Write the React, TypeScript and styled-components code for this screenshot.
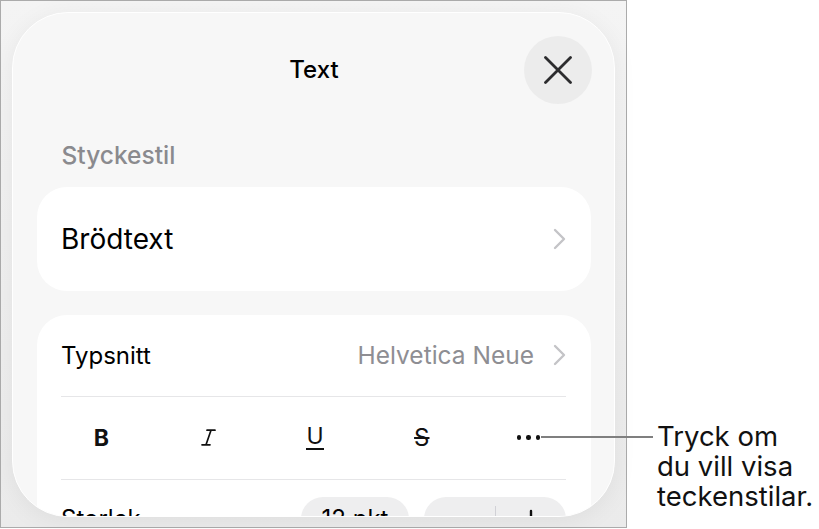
import React from "react";
import styled, { createGlobalStyle } from "styled-components";

const GlobalStyle = createGlobalStyle`
  html, body {
    margin: 0;
    padding: 0;
    background: #fff;
  }
  body {
    font-family: Inter, "Noto Sans", sans-serif;
    -webkit-font-smoothing: antialiased;
  }
`;

const Page = styled.div`
  position: relative;
  display: flex;
  align-items: flex-start;
  width: 819px;
  height: 529px;
  overflow: hidden;
`;

const Frame = styled.div`
  box-sizing: border-box;
  flex: none;
  width: 627px;
  height: 528px;
  border: 1px solid #ababab;
  padding: 11px 11px 10px 11px;
  background: linear-gradient(180deg, #f4f4f4 0%, #ebebeb 100%);
`;

const Sheet = styled.div`
  box-sizing: border-box;
  height: 100%;
  border: 1.5px solid #fff;
  border-radius: 56px;
  background: #f7f7f7;
  overflow: hidden;
  padding: 22.5px 23.5px 0 23.5px;
  box-shadow: 0 4px 24px rgba(0, 0, 0, 0.06);
`;

const Header = styled.div`
  display: grid;
  grid-template-columns: 68px 1fr 68px;
  align-items: center;
  height: 68px;
  margin-right: -1px;
`;

const Title = styled.div`
  grid-column: 2;
  text-align: center;
  font-size: 24px;
  font-weight: 500;
  color: #000;
`;

const CloseButton = styled.div`
  grid-column: 3;
  width: 68px;
  height: 68px;
  border-radius: 50%;
  background: #ececec;
  display: flex;
  align-items: center;
  justify-content: center;
`;

const SectionLabel = styled.div`
  margin-top: 37px;
  padding-left: 25px;
  font-size: 24.5px;
  line-height: 28px;
  font-weight: 500;
  color: #8a8a8e;
`;

const Card = styled.div<{ $gap: number }>`
  margin-top: ${(p) => p.$gap}px;
  background: #fff;
  border-radius: 30px;
  padding: 0 24.5px;
`;

const Row = styled.div<{ $h: number }>`
  display: flex;
  align-items: center;
  justify-content: space-between;
  height: ${(p) => p.$h}px;
`;

const BigLabel = styled.span`
  font-size: 28px;
  color: #000;
`;

const Label = styled.span`
  font-size: 24px;
  color: #000;
`;

const Value = styled.div`
  display: flex;
  align-items: center;
  gap: 19px;
  font-size: 24.5px;
  color: #8e8e93;
`;

const Divider = styled.div`
  height: 1px;
  background: #e6e6e8;
`;

const StyleRow = styled.div`
  display: grid;
  grid-template-columns: repeat(5, 1fr);
  align-items: center;
  height: 82px;
  margin: 0 -16px 0 -13px;
`;

const StyleCell = styled.div`
  display: flex;
  align-items: center;
  justify-content: center;
  color: #111;
  font-size: 23px;
`;

const Bold = styled.span`
  font-weight: 700;
`;

const Under = styled.span`
  display: inline-block;
  line-height: 22px;
  border-bottom: 2px solid #111;
  padding-bottom: 1px;
`;

const Strike = styled.span`
  font-size: 24px;
  text-decoration: line-through;
  text-decoration-thickness: 2px;
`;

const Dots = styled.div`
  display: flex;
  gap: 5px;
  span {
    width: 4.5px;
    height: 4.5px;
    border-radius: 50%;
    background: #111;
  }
`;

const SizeRow = styled.div`
  display: flex;
  align-items: center;
  justify-content: space-between;
  padding-top: 17px;
`;

const Pills = styled.div`
  display: flex;
  gap: 15px;
`;

const Pill = styled.div<{ $w: number }>`
  width: ${(p) => p.$w}px;
  height: 44px;
  border-radius: 22px;
  background: #eeeeef;
  display: flex;
  align-items: center;
  justify-content: center;
  font-size: 24px;
  color: #000;
`;

const StepHalf = styled.div`
  flex: 1;
  display: flex;
  align-items: center;
  justify-content: center;
`;

const StepSep = styled.div`
  width: 1px;
  height: 26px;
  background: #d1d1d6;
`;

const Callout = styled.div`
  margin: 421px 0 0 30px;
  font-size: 27.5px;
  line-height: 30px;
  color: #111;
`;

const Leader = styled.div`
  position: absolute;
  left: 541px;
  top: 436px;
  width: 112px;
  height: 1.5px;
  background: #7f7f7f;
`;

const Chevron = () => (
  <svg width="13" height="22" viewBox="0 0 13 22">
    <path d="M2 2 L11 11 L2 20" fill="none" stroke="#c4c4c7" strokeWidth="2.4" strokeLinecap="round" strokeLinejoin="round" />
  </svg>
);

const CloseIcon = () => (
  <svg width="28" height="28" viewBox="0 0 28 28">
    <path d="M1.5 1.5 L26.5 26.5 M26.5 1.5 L1.5 26.5" stroke="#2c2c2e" strokeWidth="2.8" strokeLinecap="round" />
  </svg>
);

const ItalicIcon = () => (
  <svg width="15" height="17" viewBox="0 0 15 17">
    <path d="M6 1.2 H14 M1 15.8 H9 M10 1.2 L5 15.8" fill="none" stroke="#111" strokeWidth="1.7" strokeLinecap="round" />
  </svg>
);

function App() {
  return (
    <Page>
      <GlobalStyle />
      <Frame>
        <Sheet>
          <Header>
            <Title>Text</Title>
            <CloseButton>
              <CloseIcon />
            </CloseButton>
          </Header>
          <SectionLabel>Styckestil</SectionLabel>
          <Card $gap={18}>
            <Row $h={104}>
              <BigLabel>Brödtext</BigLabel>
              <Chevron />
            </Row>
          </Card>
          <Card $gap={24}>
            <Row $h={81}>
              <Label>Typsnitt</Label>
              <Value>
                Helvetica Neue
                <Chevron />
              </Value>
            </Row>
            <Divider />
            <StyleRow>
              <StyleCell>
                <Bold>B</Bold>
              </StyleCell>
              <StyleCell>
                <ItalicIcon />
              </StyleCell>
              <StyleCell>
                <Under>U</Under>
              </StyleCell>
              <StyleCell>
                <Strike>S</Strike>
              </StyleCell>
              <StyleCell>
                <Dots>
                  <span />
                  <span />
                  <span />
                </Dots>
              </StyleCell>
            </StyleRow>
            <Divider />
            <SizeRow>
              <Label>Storlek</Label>
              <Pills>
                <Pill $w={108}>12 pkt</Pill>
                <Pill $w={142}>
                  <StepHalf>
                    <svg width="20" height="20" viewBox="0 0 20 20">
                      <path d="M2 10 H18" stroke="#111" strokeWidth="2.4" strokeLinecap="round" />
                    </svg>
                  </StepHalf>
                  <StepSep />
                  <StepHalf>
                    <svg width="20" height="20" viewBox="0 0 20 20">
                      <path d="M2 10 H18 M10 2 V18" stroke="#111" strokeWidth="2.4" strokeLinecap="round" />
                    </svg>
                  </StepHalf>
                </Pill>
              </Pills>
            </SizeRow>
          </Card>
        </Sheet>
      </Frame>
      <Leader />
      <Callout>
        Tryck om
        <br />
        du vill visa
        <br />
        teckenstilar.
      </Callout>
    </Page>
  );
}

export default App;
